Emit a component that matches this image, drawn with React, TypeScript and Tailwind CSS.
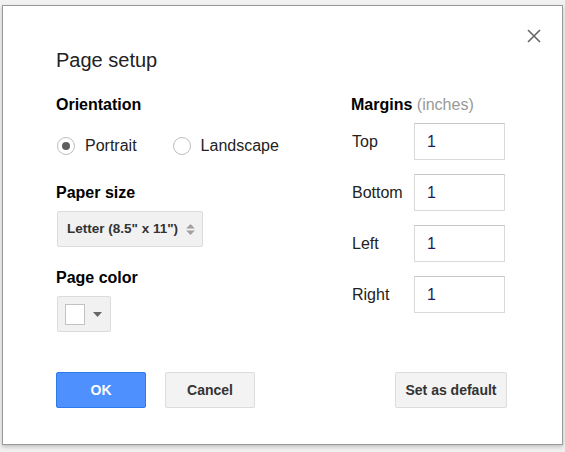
import React from "react";

const margins = ["Top", "Bottom", "Left", "Right"];

const Radio: React.FC<{ checked?: boolean; label: string }> = ({ checked = false, label }) => (
  <label className="flex items-center gap-[10px]">
    <span className="flex h-[18px] w-[18px] items-center justify-center rounded-full border border-[#bdbdbd] bg-white">
      {checked && <span className="h-[8px] w-[8px] rounded-full bg-[#5f5f5f]" />}
    </span>
    <span className="text-[16px] leading-5 text-[#222]">{label}</span>
  </label>
);

const App: React.FC = () => {
  return (
    <div
      className="h-[452px] w-[565px] overflow-hidden bg-[#f1f1f1] pl-[2px] pt-[5px]"
      style={{ fontFamily: '"Liberation Sans", Arial, sans-serif' }}
    >
      <div className="relative h-[440px] w-[561px] border border-[#9a9a9a] bg-white pl-[53px] pr-[55px] pt-[42px] shadow-[0_2px_4px_rgba(0,0,0,0.2)]">
        {/* close */}
        <button className="absolute right-[21px] top-[23px] h-[14px] w-[14px]">
          <svg viewBox="0 0 14 14" className="h-[14px] w-[14px]">
            <path d="M1 1L13 13M13 1L1 13" stroke="#666" strokeWidth="1.6" fill="none" />
          </svg>
        </button>

        <h1 className="text-[20px] leading-6 text-[#222]">Page setup</h1>

        <div className="mt-[23px] grid grid-cols-[295px_155px]">
          {/* left column */}
          <div>
            <h2 className="text-[16px] font-bold leading-5 text-black">Orientation</h2>
            <div className="mt-[21px] flex items-center gap-[36px] pl-[1px]">
              <Radio checked label="Portrait" />
              <Radio label="Landscape" />
            </div>

            <h2 className="mt-[27px] text-[16px] font-bold leading-5 text-black">Paper size</h2>
            <div className="ml-[1px] mt-[8px] flex h-[36px] w-[146px] items-center justify-between rounded-[2px] border border-[#dcdcdc] bg-[#f1f1f1] pl-[9px] pr-[7px]">
              <span className="whitespace-nowrap text-[13.5px] font-bold text-[#333]">Letter (8.5" x 11")</span>
              <svg viewBox="0 0 8 12" className="h-[13px] w-[9px] shrink-0">
                <path d="M0 5L4 1L8 5Z M0 7L4 11L8 7Z" fill="#a0a0a0" />
              </svg>
            </div>

            <h2 className="mt-[21px] text-[16px] font-bold leading-5 text-black">Page color</h2>
            <div className="ml-[1px] mt-[8px] flex h-[36px] w-[54px] items-center gap-[8px] rounded-[2px] border border-[#dcdcdc] bg-[#f1f1f1] pl-[7px]">
              <span className="h-[21px] w-[20px] border border-[#c2c2c2] bg-white" />
              <svg viewBox="0 0 9 5" className="h-[5px] w-[9px]">
                <path d="M0 0L9 0L4.5 5Z" fill="#666" />
              </svg>
            </div>
          </div>

          {/* right column */}
          <div>
            <h2 className="text-[16px] leading-5 text-black">
              <span className="font-bold">Margins</span>{" "}
              <span className="text-[#999]">(inches)</span>
            </h2>
            <div className="mt-[8px] flex flex-col gap-[14px]">
              {margins.map((m) => (
                <div key={m} className="flex items-center">
                  <span className="w-[63px] pl-[1px] text-[16px] text-[#222]">{m}</span>
                  <input
                    defaultValue="1"
                    className="h-[37px] w-[91px] border border-[#d9d9d9] border-t-[#c6c6c6] pl-[12px] text-[16px] text-[#1c1c5e] outline-none"
                  />
                </div>
              ))}
            </div>
          </div>
        </div>

        <div className="mt-[40px] flex items-center justify-between">
          <div className="flex gap-[19px]">
            <button className="h-[36px] w-[90px] rounded-[2px] border border-[#3079ed] bg-[#4d90fe] text-[14px] font-bold text-white">
              OK
            </button>
            <button className="h-[36px] w-[90px] rounded-[2px] border border-[#dcdcdc] bg-[#f3f3f3] text-[14px] font-bold text-[#333]">
              Cancel
            </button>
          </div>
          <button className="h-[36px] w-[112px] rounded-[2px] border border-[#dcdcdc] bg-[#f3f3f3] text-[14px] font-bold text-[#333]">
            Set as default
          </button>
        </div>
      </div>
    </div>
  );
};

export default App;
